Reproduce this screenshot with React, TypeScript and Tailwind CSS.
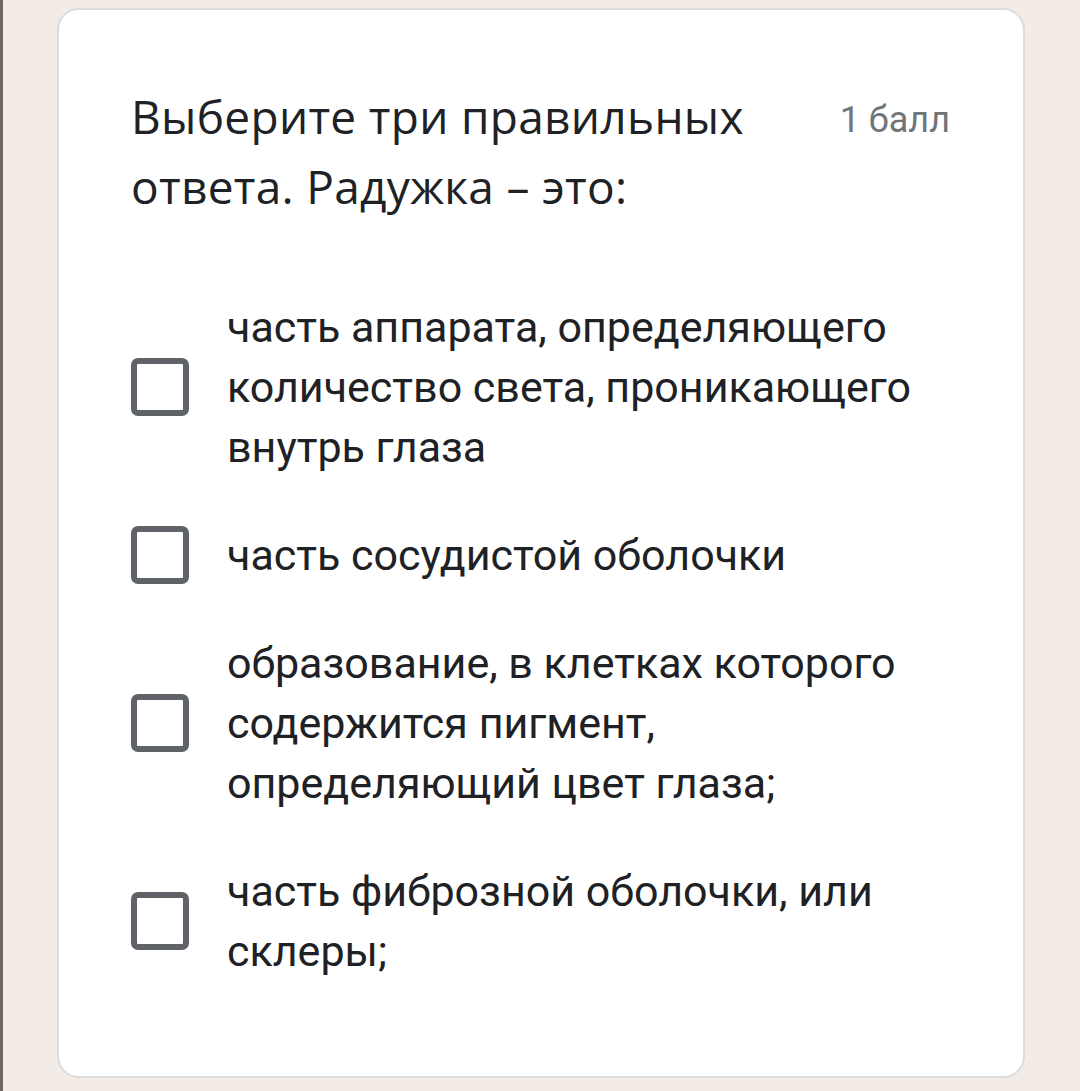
import React from 'react';

const options = [
  'часть аппарата, определяющего количество света, проникающего внутрь глаза',
  'часть сосудистой оболочки',
  'образование, в клетках которого содержится пигмент, определяющий цвет глаза;',
  'часть фиброзной оболочки, или склеры;',
];

function Checkbox() {
  return (
    <div className="w-[58px] h-[58px] shrink-0 rounded-[7px] border-[6px] border-[#5f6368] bg-white" />
  );
}

export default function App() {
  return (
    <div className="min-h-[1091px] w-[1080px] bg-[#f3ebe6] border-l-[3px] border-[#6e6764] pt-[8px] pl-[54px]">
      <div className="w-[968px] h-[1070px] rounded-[22px] border-2 border-[#dcdcdc] bg-white pt-[71px] pl-[72px] pr-[73px]">
        <div className="flex items-start justify-between">
          <h1 className="w-[660px] text-[46px] leading-[70px] tracking-[0.3px] text-[#202124] font-['Open_Sans',sans-serif]">
            Выберите три правильных ответа. Радужка – это:
          </h1>
          <span className="pt-[4px] text-[36px] leading-[70px] text-[#70757a] font-['Roboto',sans-serif]">1 балл</span>
        </div>

        <div className="mt-[76px] flex flex-col gap-[48px]">
          {options.map((text, i) => (
            <label key={i} className="flex items-center gap-[38px]">
              <Checkbox />
              <span className="flex-1 text-[43px] leading-[60px] text-[#202124] font-['Roboto',sans-serif]">
                {text}
              </span>
            </label>
          ))}
        </div>
      </div>
    </div>
  );
}
